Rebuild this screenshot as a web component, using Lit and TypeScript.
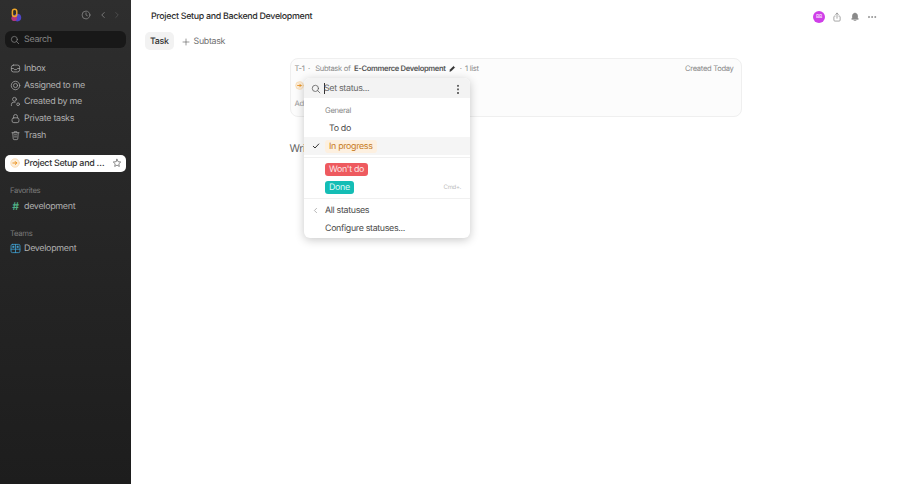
import { LitElement, html, css, svg } from "lit";
import { customElement } from "lit/decorators.js";

const ic = (body: unknown, cls = "ic") => html`<svg class=${cls} viewBox="0 0 16 16" fill="none" stroke="currentColor" stroke-width="1.2" stroke-linecap="round" stroke-linejoin="round">${body}</svg>`;

const statusIcon = svg`<circle cx="8" cy="8" r="6.8" fill="#fdeeda" stroke="#f8cf96" stroke-width="1"/><path d="M4.6 8h6.2M8.4 5.6 10.8 8l-2.4 2.4" stroke="#e8890c" stroke-width="1.4"/>`;

@customElement("app-root")
export class AppRoot extends LitElement {
  static styles = css`
    :host { display: flex; width: 900px; height: 484px; overflow: hidden; background: #fff; font-family: Inter, "Liberation Sans", sans-serif; color: #333; position: relative; text-rendering: geometricPrecision; letter-spacing: -0.02em; }
    .ic { width: 12px; height: 12px; flex: none; }
    .side { width: 131px; flex: none; box-sizing: border-box; background: linear-gradient(180deg, #2e2e2e 0%, #1d1d1d 100%); color: #b0b0b0; font-size: 8.95px; padding: 0 5px; display: flex; flex-direction: column; }
    .top { height: 30px; display: flex; align-items: center; padding: 0 4px; gap: 7px; }
    .logo { width: 14px; height: 14px; margin-right: auto; }
    .top .ic { width: 10px; height: 10px; color: #8c8c8c; }
    .top .ic.dim { color: #555; margin-left: -3px; }
    .search { height: 17px; margin-top: 0.5px; background: #181818; border-radius: 6px; display: flex; align-items: center; gap: 4px; padding: 1px 5px 0; box-sizing: border-box; color: #858585; }
    .search .ic { width: 10px; height: 10px; }
    .nav { margin-top: 12.5px; display: flex; flex-direction: column; }
    .row { height: 16.7px; display: flex; align-items: center; gap: 3px; padding: 0 5px; }
    .row .ic { color: #a0a0a0; width: 11px; height: 11px; }
    .active { margin-top: 11.5px; height: 17px; background: #fff; border-radius: 5px; color: #333; display: flex; align-items: center; gap: 4px; padding: 0 4px 0 5px; font-weight: 500; white-space: nowrap; }
    .active span { flex: 1; overflow: hidden; text-overflow: ellipsis; margin-right: -1px; }
    .active .ic { color: #666; width: 10px; height: 10px; }
    .label { font-size: 7.7px; color: #7a7a7a; padding: 0 5px; height: 12px; display: flex; align-items: center; }
    .fav { margin-top: 13px; }
    .teams { margin-top: 12px; }
    .label + .row { margin-top: 1.5px; }
    .hash { color: #4fae84; font-weight: 600; width: 11px; text-align: center; font-size: 10.5px; }
    .row .team { color: #3f9fd0; }

    .main { flex: 1; min-width: 0; display: flex; flex-direction: column; }
    .head { height: 32px; display: flex; align-items: center; padding: 1px 23px 0 20px; box-sizing: border-box; font-size: 8.9px; font-weight: 500; color: #2e2e2e; }
    .head .title { margin-right: auto; }
    .acts { display: flex; align-items: center; gap: 8px; color: #8a8a8a; }
    .acts .ic { width: 10px; height: 10px; }
    .acts .ic:last-child { margin-left: -1px; }
    .avatar { width: 12px; height: 12px; margin-right: -1px; border-radius: 50%; background: #cf3fe8; color: #f7d7fb; font-size: 5px; display: flex; align-items: center; justify-content: center; font-weight: 600; }
    .tabs { display: flex; align-items: center; gap: 8px; padding: 0 14px; font-size: 8.85px; height: 18px; }
    .tab { height: 18px; background: #f2f2f2; border-radius: 5px; padding: 1px 5px 0; box-sizing: border-box; display: flex; align-items: center; font-weight: 500; color: #333; }
    .add { display: flex; align-items: center; gap: 4px; color: #707070; padding-top: 1px; }
    .add .ic { width: 8px; height: 8px; color: #555; }
    .card { margin: 8px auto 0; width: 452px; height: 59px; box-sizing: border-box; border: 1px solid #efefef; border-radius: 8px; background: #fcfcfc; display: flex; flex-direction: column; padding: 0 6px 0 4px; }
    .meta { height: 19px; display: flex; align-items: center; gap: 3.5px; font-size: 7.6px; color: #8b8b8b; white-space: nowrap; }
    .meta b { font-weight: 600; color: #555; }
    .meta .right { margin-left: auto; margin-right: 1px; }
    .meta .ic { width: 7px; height: 7px; color: #333; }
    .line { height: 15px; display: flex; align-items: center; }
    .line .ic { width: 9px; height: 9px; }
    .sub { margin-top: 5px; font-size: 7.7px; color: #999; line-height: 12px; }
    .write { margin: 24px auto 0; width: 452px; font-size: 10.6px; color: #666; line-height: 16px; }

    .pop { position: absolute; left: 304px; top: 78px; width: 166px; height: 160px; border-radius: 6px; background: #fff; box-shadow: 0 2px 10px rgba(0,0,0,.22); overflow: hidden; font-size: 8.85px; color: #4a4a4a; display: flex; flex-direction: column; }
    .phead { height: 20px; flex: none; background: #f3f3f3; display: flex; align-items: center; padding: 1px 8px 0 7px; box-sizing: border-box; gap: 3px; color: #666; font-size: 8.9px; }
    .phead .ic { width: 10px; height: 10px; color: #555; }
    .caret { width: 1px; height: 11px; background: #333; margin-right: -4px; flex: none; }
    .phead span { margin-right: auto; }
    .dots { width: 2px; height: 10px; background: radial-gradient(circle, #666 .9px, transparent 1.1px) 0 0 / 2px 3.6px repeat-y; flex: none; margin-right: 3px; }
    .group { font-size: 7.7px; color: #8a8a8a; padding: 8px 0 0 21px; height: 13px; line-height: 10px; }
    .item { height: 18px; display: flex; align-items: center; padding-left: 21px; position: relative; }
    .pill { padding: 0 4px; height: 13px; border-radius: 3px; display: flex; align-items: center; line-height: 13px; }
    .todo { color: #4a4a4a; }
    .prog { background: #fdf0e0; color: #c77a1c; }
    .wont { background: #ee5a5f; color: #fde4e4; }
    .done { background: #14bdb5; color: #dff8f6; }
    .sel { background: #f5f5f5; }
    .check { position: absolute; left: 8px; top: 5px; width: 8px; height: 8px; color: #333; }
    .sep { height: 1px; background: #f0f0f0; flex: none; }
    .sep.g { margin-top: 2px; }
    .item.g { margin-top: 2px; }
    .hint { position: absolute; right: 9px; font-size: 6px; color: #bdbdbd; }
    .back { position: absolute; left: 8px; top: 6px; width: 7px; height: 7px; color: #777; }
  `;

  render() {
    return html`
      <aside class="side">
        <div class="top">
          <svg class="logo" viewBox="0 0 14 14" fill="none"><circle cx="8.4" cy="9.6" r="3.8" fill="#4f46c8"/><circle cx="5.2" cy="10.2" r="2.8" fill="#b0367f"/><path d="M3.4 6.200V3.400a2.200 2.200 0 0 1 4.400 0V6.200a2.200 2.200 0 0 1-4.400 0z" stroke="#eda52a" stroke-width="1.500"/></svg>
          ${ic(svg`<circle cx="8" cy="8" r="6.3"/><path d="M8 4.600V8l2.200 1.200"/>`)}
          ${ic(svg`<path d="M10 4 6 8l4 4"/>`)}
          ${ic(svg`<path d="M6 4l4 4-4 4"/>`, "ic dim")}
        </div>
        <div class="search">${ic(svg`<circle cx="7" cy="7" r="4.800"/><path d="m10.600 10.600 3.400 3.400"/>`)}Search</div>
        <nav class="nav">
          <div class="row">${ic(svg`<rect x="2" y="3" width="12" height="10" rx="3"/><path d="M2 8h3.200l1.300 1.600h3L10.800 8H14"/>`)}Inbox</div>
          <div class="row">${ic(svg`<circle cx="8" cy="8" r="6.200"/><circle cx="8" cy="8" r="3"/>`)}Assigned to me</div>
          <div class="row">${ic(svg`<circle cx="6.500" cy="4.800" r="2.800"/><path d="M2 14v-1.500A3.500 3.500 0 0 1 5.500 9h2"/><circle cx="11.800" cy="12" r="2"/>`)}Created by me</div>
          <div class="row">${ic(svg`<rect x="3" y="7" width="10" height="7" rx="2.500"/><path d="M5.200 7V5a2.800 2.800 0 0 1 5.600 0v2"/>`)}Private tasks</div>
          <div class="row">${ic(svg`<path d="M2.800 4h10.400M6 4V2.500h4V4M4 4l.7 9a1.300 1.300 0 0 0 1.300 1h4a1.300 1.300 0 0 0 1.300-1L12 4M6.500 7h3M6.500 10h3"/>`)}Trash</div>
        </nav>
        <div class="active">${ic(statusIcon, "ic st")}<span>Project Setup and Backend Development</span>${ic(svg`<path d="m8 2 1.800 3.900 4.200.5-3.100 2.900.8 4.200L8 11.400l-3.700 2.100.8-4.200L2 6.400l4.200-.5z"/>`)}</div>
        <div class="label fav">Favorites</div>
        <div class="row"><span class="hash">#</span>development</div>
        <div class="label teams">Teams</div>
        <div class="row">${ic(svg`<rect x="1.500" y="2" width="13" height="12" rx="2"/><path d="M8 2v12M1.500 9h13"/><rect x="3.500" y="4" width="2.800" height="3" fill="currentColor" stroke="none"/><rect x="9.700" y="4" width="2.800" height="3" fill="currentColor" stroke="none"/>`, "ic team")}Development</div>
      </aside>
      <main class="main">
        <header class="head">
          <span class="title">Project Setup and Backend Development</span>
          <div class="acts">
            <span class="avatar">BB</span>
            ${ic(svg`<path d="M5 6.500H4a1.500 1.500 0 0 0-1 1.300V13a1.500 1.500 0 0 0 1.500 1.500h7A1.500 1.500 0 0 0 13 13V7.800a1.500 1.500 0 0 0-1-1.300h-1M8 10V1.800M5.800 3.800 8 1.800l2.200 2"/>`)}
            ${ic(svg`<path fill="currentColor" d="M8 2a4 4 0 0 0-4 4v3l-1.300 2.500h10.600L12 9V6a4 4 0 0 0-4-4zM6.500 13.500h3"/>`)}
            ${ic(svg`<circle cx="3" cy="8" r=".8" fill="currentColor"/><circle cx="8" cy="8" r=".8" fill="currentColor"/><circle cx="13" cy="8" r=".8" fill="currentColor"/>`)}
          </div>
        </header>
        <div class="tabs">
          <div class="tab">Task</div>
          <div class="add">${ic(svg`<path d="M8 2v12M2 8h12"/>`)}Subtask</div>
        </div>
        <section class="card">
          <div class="meta">
            <span>T-1</span><span>·</span><span>&nbsp;Subtask of</span><b>E-Commerce Development</b>
            ${ic(svg`<path fill="currentColor" d="m2 14 .8-3.500 7.500-7.500 2.700 2.700-7.500 7.500z"/>`)}
            <span>·</span><span>1 list</span>
            <span class="right">Created Today</span>
          </div>
          <div class="line">${ic(statusIcon)}</div>
          <div class="sub">Add a description</div>
        </section>
        <div class="write">Write something...</div>
      </main>
      <div class="pop">
        <div class="phead">
          ${ic(svg`<circle cx="7" cy="7" r="5"/><path d="m10.800 10.800 3.400 3.400"/>`)}
          <i class="caret"></i><span>Set status...</span><i class="dots"></i>
        </div>
        <div class="group">General</div>
        <div class="item"><span class="pill todo">To do</span></div>
        <div class="item sel">${ic(svg`<path d="m2.500 8.500 3.500 3.500 7.500-8" stroke-width="2"/>`, "check")}<span class="pill prog">In progress</span></div>
        <div class="sep g"></div>
        <div class="item g"><span class="pill wont">Won't do</span></div>
        <div class="item"><span class="pill done">Done</span><span class="hint">Cmd+.</span></div>
        <div class="sep g"></div>
        <div class="item g">${ic(svg`<path d="M10.500 3 5.500 8l5 5"/>`, "back")}All statuses</div>
        <div class="item">Configure statuses...</div>
      </div>
    `;
  }
}
